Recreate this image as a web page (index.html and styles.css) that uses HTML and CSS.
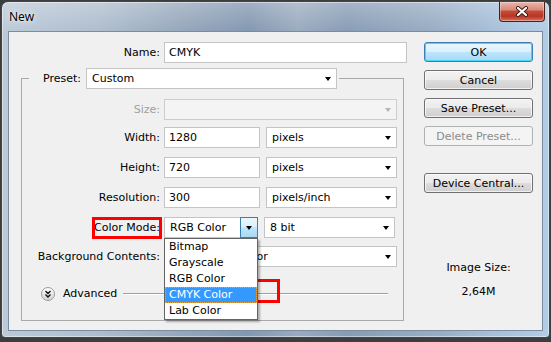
FILE: index.html
```html
<!DOCTYPE html>
<html lang="en">
<head>
    <meta charset="UTF-8">
    <meta name="viewport" content="width=device-width, initial-scale=1.0">
    <title>New</title>
    <link rel="stylesheet" href="styles.css">
</head>
<body>
    <div class="window">
        <div class="titlebar">
            <span class="title">New</span>
            <div class="close-button">
                <svg width="14" height="11" viewBox="0 0 14 11">
                    <path d="M3 2 L11 9 M11 2 L3 9" stroke="#3a1a16" stroke-width="4" stroke-linecap="round"/>
                    <path d="M3 2 L11 9 M11 2 L3 9" stroke="#fff" stroke-width="2.2" stroke-linecap="round"/>
                </svg>
            </div>
        </div>

        <div class="client">
            <div class="form">
                <div class="name-row">
                    <span class="label name-label">Name:</span>
                    <div class="textbox name-box">CMYK</div>
                </div>

                <!-- Preset group box -->
                <div class="group">
                    <div class="group-head">
                        <span class="label preset-label">Preset:</span>
                        <div class="combo preset-combo">Custom<span class="arrow"></span></div>
                    </div>

                    <div class="form-row size-row">
                        <span class="label disabled">Size:</span>
                        <div class="combo full disabled-combo"><span class="arrow"></span></div>
                    </div>
                    <div class="form-row width-row">
                        <span class="label">Width:</span>
                        <div class="textbox short">1280</div>
                        <div class="combo unit">pixels<span class="arrow"></span></div>
                    </div>
                    <div class="form-row">
                        <span class="label">Height:</span>
                        <div class="textbox short">720</div>
                        <div class="combo unit">pixels<span class="arrow"></span></div>
                    </div>
                    <div class="form-row">
                        <span class="label">Resolution:</span>
                        <div class="textbox short">300</div>
                        <div class="combo unit">pixels/inch<span class="arrow"></span></div>
                    </div>
                    <div class="form-row">
                        <span class="label"><span class="marked">Color Mode:</span></span>
                        <div class="combo mode-combo">
                            RGB Color
                            <span class="drop-button"><span class="arrow"></span></span>
                            <div class="callout"></div>
                            <ul class="dropdown-list">
                                <li>Bitmap</li>
                                <li>Grayscale</li>
                                <li>RGB Color</li>
                                <li class="selected">CMYK Color</li>
                                <li>Lab Color</li>
                            </ul>
                        </div>
                        <div class="combo unit">8 bit<span class="arrow"></span></div>
                    </div>
                    <div class="form-row bg-row">
                        <span class="label">Background Contents:</span>
                        <div class="combo full">Background Color<span class="arrow"></span></div>
                    </div>

                    <div class="advanced">
                        <span class="expander">
                            <svg width="14" height="14" viewBox="0 0 14 14">
                                <defs>
                                    <linearGradient id="knob" x1="0" y1="0" x2="0" y2="1">
                                        <stop offset="0" stop-color="#ffffff"/>
                                        <stop offset="1" stop-color="#d2d2d2"/>
                                    </linearGradient>
                                </defs>
                                <circle cx="7" cy="7" r="6.5" fill="url(#knob)" stroke="#9a9a9a"/>
                                <path d="M4.5 4 L7 6.5 L9.5 4 M4.5 7.5 L7 10 L9.5 7.5" fill="none" stroke="#111" stroke-width="1.4"/>
                            </svg>
                        </span>
                        <span class="advanced-text">Advanced</span>
                        <span class="rule"></span>
                    </div>
                </div>
            </div>

            <div class="side">
                <div class="button default">OK</div>
                <div class="button">Cancel</div>
                <div class="button">Save Preset...</div>
                <div class="button disabled-button">Delete Preset...</div>
                <div class="button device">Device Central...</div>
                <div class="image-size">
                    <div>Image Size:</div>
                    <div class="size-value">2,64M</div>
                </div>
            </div>
        </div>
    </div>
</body>
</html>
```

FILE: styles.css
```css
* {
    box-sizing: border-box;
}
body {
    margin: 0;
    background: #3d3d3d;
    font-family: "DejaVu Sans", Verdana, sans-serif;
    font-size: 11px;
    color: #000;
}
.window {
    width: 549px;
    height: 337px;
    margin: 1px 0 0 1px;
    padding: 0 6px 6px;
    border: 1px solid #3b4757;
    border-radius: 7px 7px 4px 4px;
    background:
        linear-gradient(to bottom, rgba(255, 255, 255, 0.25), rgba(255, 255, 255, 0) 30px),
        linear-gradient(to right, #bccad8 0%, #aebdcd 18%, #96a8bc 32%, #8297b1 45%, #9aabbf 54%, #889cb5 63%, #97abc2 78%, #a9c2dc 92%, #b3cde6 100%);
    box-shadow: inset 0 0 0 1px rgba(255, 255, 255, 0.45);
}
.titlebar {
    display: flex;
    justify-content: space-between;
    align-items: flex-start;
    height: 29px;
    margin: 0 -6px;
    padding: 0 4px 0 7px;
}
.title {
    margin-top: 7px;
    font-family: "Noto Sans", sans-serif;
    font-size: 12px;
    line-height: 16px;
    text-shadow: 0 0 6px rgba(255, 255, 255, 0.9), 0 0 2px rgba(255, 255, 255, 0.8);
}
.close-button {
    display: flex;
    justify-content: center;
    align-items: center;
    width: 46px;
    height: 20px;
    border: 1px solid #4a1f19;
    border-top: none;
    border-radius: 0 0 4px 4px;
    background: linear-gradient(to bottom, #e9b7ad 0%, #d88b7c 40%, #c54a37 50%, #b83523 75%, #d5735f 100%);
    box-shadow: inset 0 0 0 1px rgba(255, 255, 255, 0.35);
}
.client {
    display: flex;
    height: 300px;
    padding: 10px 9px 0 12px;
    background: #f0f0f0;
    border: 1px solid #7b8ca1;
}
.form {
    width: 386px;
}
.label {
    flex: none;
    padding-right: 4px;
    text-align: right;
    line-height: 14px;
}
.label.disabled {
    color: #a0a0a0;
}
.name-row {
    display: flex;
    align-items: center;
}
.name-label {
    width: 143px;
}
.textbox,
.combo {
    display: flex;
    align-items: center;
    height: 21px;
    background: #fff;
    border: 1px solid #c4c4c4;
    white-space: nowrap;
}
.textbox {
    padding-left: 4px;
}
.name-box {
    width: 243px;
}
.textbox.short {
    width: 96px;
}
.combo {
    padding: 0 5px;
}
.combo .arrow {
    margin-left: auto;
    border-left: 3.5px solid transparent;
    border-right: 3.5px solid transparent;
    border-top: 4px solid #000;
}
.combo.full {
    width: 233px;
}
.combo.unit {
    width: 131px;
    margin-left: 6px;
}
.disabled-combo {
    background: #f4f4f4;
    border-color: #cdcdcd;
}
.disabled-combo .arrow {
    border-top-color: #b5b5b5;
}

/* Preset group box */
.group {
    width: 383px;
    margin-top: 15px;
    padding: 0 6px 19px 12px;
    border: 1px solid #a9a9a9;
}
.group-head {
    display: flex;
    align-items: center;
    width: fit-content;
    margin: -11px 0 0 -5px;
    padding: 0 2px 0 14px;
    background: #f0f0f0;
}
.group-head .preset-label {
    padding-right: 5px;
}
.preset-combo {
    width: 251px;
}
.form-row {
    display: flex;
    align-items: center;
    margin-top: 9px;
}
.form-row .label {
    width: 130px;
}
.size-row {
    margin-top: 10px;
}
.width-row {
    margin-top: 7px;
}
.bg-row {
    margin-top: 8px;
}
.marked {
    position: relative;
}
.marked::after {
    content: "";
    position: absolute;
    left: -2px;
    right: -2px;
    top: -4px;
    bottom: -5px;
    border: 3px solid #f00;
}
.mode-combo {
    position: relative;
    width: 94px;
    padding-right: 0;
}
.drop-button {
    display: flex;
    justify-content: center;
    align-items: center;
    width: 18px;
    height: 21px;
    margin: -1px -1px -1px auto;
    border: 1px solid #3c7fb1;
    background: linear-gradient(to bottom, #eaf6fd 0%, #d9f0fc 50%, #bee6fd 50%, #a7d9f5 100%);
}
.drop-button .arrow {
    margin-left: 0;
}
.callout {
    position: absolute;
    left: 76px;
    top: 61px;
    width: 39px;
    height: 24px;
    border: 3px solid #f00;
}
.dropdown-list {
    position: absolute;
    left: -1px;
    top: 20px;
    z-index: 2;
    width: 94px;
    margin: 0;
    padding: 0;
    list-style: none;
    background: #fff;
    border: 1px solid #646464;
    box-shadow: 2px 2px 2px rgba(0, 0, 0, 0.3);
}
.dropdown-list li {
    height: 16px;
    padding-left: 4px;
    line-height: 16px;
}
.dropdown-list li.selected {
    background: #3399ff;
    color: #fff;
    outline: 1px dotted #e8a040;
    outline-offset: -1px;
}
.advanced {
    display: flex;
    align-items: center;
    height: 15px;
    margin-top: 19px;
    padding: 0 9px 0 7px;
}
.expander {
    display: flex;
    width: 14px;
    height: 14px;
}
.advanced-text {
    margin-left: 8px;
    line-height: 14px;
}
.rule {
    flex: 1;
    margin-left: 6px;
    border-top: 1px solid #a0a0a0;
    border-bottom: 1px solid #fff;
}

/* Right hand buttons */
.side {
    width: 109px;
    margin-left: 17px;
}
.button {
    display: flex;
    justify-content: center;
    align-items: center;
    height: 20px;
    margin-bottom: 8px;
    border: 1px solid #707070;
    border-radius: 3px;
    background: linear-gradient(to bottom, #f2f2f2 0%, #ebebeb 50%, #dddddd 50%, #cfcfcf 100%);
    box-shadow: inset 0 0 0 1px rgba(255, 255, 255, 0.7);
}
.button.default {
    border-color: #3c7fb1;
    background: linear-gradient(to bottom, #eaf6fd 0%, #d9f0fc 50%, #bee6fd 50%, #a7d9f5 100%);
    box-shadow: inset 0 0 0 1px #48d3fb;
}
.button.disabled-button {
    color: #8b8b8b;
    border-color: #adb2b5;
    background: #f4f4f4;
    box-shadow: none;
}
.button.device {
    margin-top: 27px;
}
.image-size {
    margin-top: 68px;
    text-align: center;
    line-height: 14px;
}
.size-value {
    margin-top: 10px;
}
```
